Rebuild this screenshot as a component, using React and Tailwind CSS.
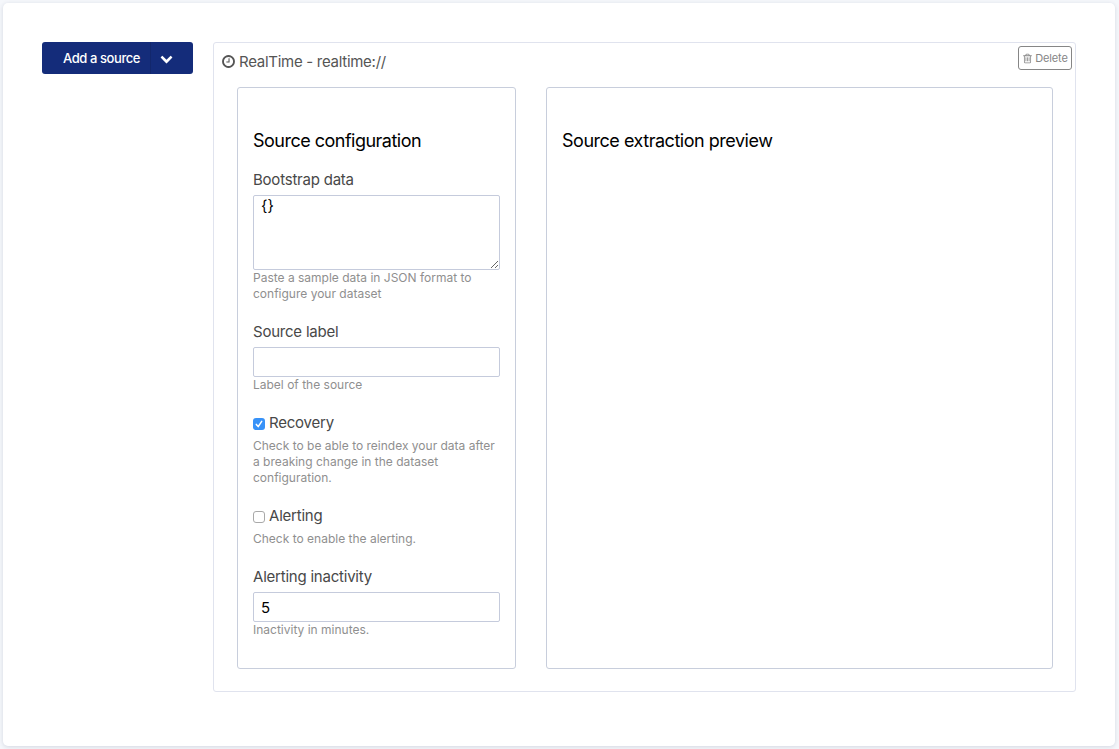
const ICONS = {
  clock:
    'M1024 544v448q0 14-9 23t-23 9h-320q-14 0-23-9t-9-23v-64q0-14 9-23t23-9h224v-352q0-14 9-23t23-9h64q14 0 23 9t9 23zm416 352q0-148-73-273t-198-198-273-73-273 73-198 198-73 273 73 273 198 198 273 73 273-73 198-198 73-273zm224 0q0 209-103 385.5t-279.5 279.5-385.5 103-385.5-103-279.5-279.5-103-385.5 103-385.5 279.5-279.5 385.5-103 385.5 103 279.5 279.5 103 385.5z',
  trash:
    'M704 736v576q0 14-9 23t-23 9h-64q-14 0-23-9t-9-23v-576q0-14 9-23t23-9h64q14 0 23 9t9 23zm256 0v576q0 14-9 23t-23 9h-64q-14 0-23-9t-9-23v-576q0-14 9-23t23-9h64q14 0 23 9t9 23zm256 0v576q0 14-9 23t-23 9h-64q-14 0-23-9t-9-23v-576q0-14 9-23t23-9h64q14 0 23 9t9 23zm128 724v-948h-896v948q0 22 7 40.5t14.5 27 10.5 8.5h832q3 0 10.5-8.5t14.5-27 7-40.5zm-672-1076h448l-48-117q-7-9-17-11h-317q-10 2-17 11zm928 32v64q0 14-9 23t-23 9h-96v948q0 83-47 143.5t-113 60.5h-832q-66 0-113-58.5t-47-141.5v-952h-96q-14 0-23-9t-9-23v-64q0-14 9-23t23-9h309l70-167q15-37 54-63t79-26h320q40 0 79 26t54 63l70 167h309q14 0 23 9t9 23z',
  chevron:
    'M1683 808l-742 741q-19 19-45 19t-45-19l-742-741q-19-19-19-45.5t19-45.5l166-165q19-19 45-19t45 19l531 531 531-531q19-19 45-19t45 19l166 165q19 19 19 45.5t-19 45.5z',
};

function Icon({ name, className }) {
  return (
    <svg viewBox="0 0 1792 1792" fill="currentColor" className={className} aria-hidden="true">
      <path d={ICONS[name]} />
    </svg>
  );
}

function Label({ children }) {
  return <span className="block h-5 text-[15px] leading-5 tracking-[-0.22px] text-[#484848]">{children}</span>;
}

function Help({ children }) {
  return <p className="text-xs leading-4 whitespace-nowrap text-[#8f8f8f]">{children}</p>;
}

function Checkbox({ checked }) {
  if (!checked) {
    return <span className="mt-[5px] size-3 shrink-0 rounded-[3px] border border-[#a9a9a9] bg-white" />;
  }
  return (
    <span className="mt-[5px] flex size-3 shrink-0 items-center justify-center rounded-[3px] bg-[#3792f8] text-white">
      <svg viewBox="0 0 12 12" className="size-3" fill="none" stroke="currentColor" strokeWidth="1.5" strokeLinecap="round" strokeLinejoin="round">
        <path d="M3.3 6.4 5.2 8.6 8.7 3.3" />
      </svg>
    </span>
  );
}

function CheckField({ label, help, checked }) {
  return (
    <div className="flex flex-col gap-[5px]">
      <div className="flex items-start gap-1">
        <Checkbox checked={checked} />
        <Label>{label}</Label>
      </div>
      <Help>{help}</Help>
    </div>
  );
}

const inputClass =
  'block w-full rounded-[2px] border border-[#c5cbdc] bg-white px-[7px] text-[15px] text-black outline-none';

function TextField({ label, help, value }) {
  return (
    <div>
      <Label>{label}</Label>
      <input className={inputClass + ' mt-[5px] h-[30px]'} defaultValue={value} />
      <Help>{help}</Help>
    </div>
  );
}

export default function App() {
  return (
    <div className="flex h-[749px] w-[1119px] bg-[#f5f7fb] pt-[3px] pr-1 pb-[3px] pl-[3px] font-['Inter','Liberation_Sans',sans-serif]">
      <main className="flex flex-1 items-start gap-5 rounded-[5px] bg-white pt-[39px] pr-[39px] pl-[39px] shadow-[0_1px_4px_rgba(40,50,90,0.16)]">
        <button className="flex h-8 w-[151px] shrink-0 items-stretch rounded-[3px] bg-[#142c7a] text-[13px] font-medium text-white">
          <span className="flex w-[109px] items-center border-r border-[#12276c] pt-[2px] pl-[21px] tracking-[-0.42px] whitespace-nowrap">
            Add a source
          </span>
          <span className="flex items-center pl-[9px]">
            <Icon name="chevron" className="size-[13px]" />
          </span>
        </button>

        <section className="h-[650px] w-[863px] shrink-0 rounded-[3px] border border-[#e0e3ee]">
          <header className="flex h-11 items-start justify-between pt-[3px] pr-[3px] pl-[7px]">
            <h2 className="mt-[6px] flex items-center text-[15px] leading-5 tracking-[-0.28px] text-[#555]">
              <Icon name="clock" className="mr-[3px] mb-px size-[15px]" />
              RealTime - realtime://
            </h2>
            <button className="flex h-6 w-[54px] items-center justify-center gap-[2px] rounded-[3px] border border-[#868686] text-[11px] tracking-[-0.15px] text-[#868686]">
              <Icon name="trash" className="size-[11px]" />
              Delete
            </button>
          </header>

          <div className="flex gap-[30px] pl-[23px]">
            <div className="h-[582px] w-[279px] rounded-[3px] border border-[#c8cedc] px-[15px] pt-[43px]">
              <h3 className="mb-[19px] text-lg leading-5 tracking-[-0.51px] whitespace-nowrap text-black">Source configuration</h3>
              <div className="flex flex-col gap-5">
                <div>
                  <Label>Bootstrap data</Label>
                  <textarea className={inputClass + ' mt-[5px] h-[75px] resize py-0 leading-5'} defaultValue="{}" />
                  <Help>
                    Paste a sample data in JSON format to
                    <br />
                    configure your dataset
                  </Help>
                </div>
                <TextField label="Source label" help="Label of the source" value="" />
                <CheckField
                  checked
                  label="Recovery"
                  help={
                    <>
                      Check to be able to reindex your data after
                      <br />a breaking change in the dataset
                      <br />
                      configuration.
                    </>
                  }
                />
                <CheckField label="Alerting" help="Check to enable the alerting." />
                <TextField label="Alerting inactivity" help="Inactivity in minutes." value="5" />
              </div>
            </div>
            <div className="h-[582px] w-[507px] rounded-[3px] border border-[#c8cedc] px-[15px] pt-[43px]">
              <h3 className="text-lg leading-5 tracking-[-0.48px] text-black">Source extraction preview</h3>
            </div>
          </div>
        </section>
      </main>
    </div>
  );
}
